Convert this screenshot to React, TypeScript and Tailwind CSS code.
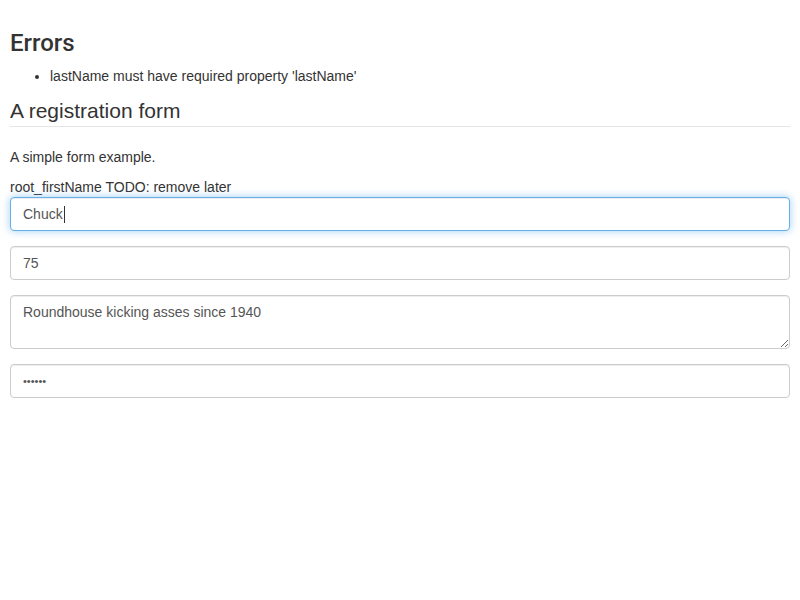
import { FC } from 'react';

const inputBase =
  'block w-full h-[34px] px-3 py-1.5 leading-[20px] text-[#555] bg-white border border-[#ccc] rounded-[4px] shadow-[inset_0_1px_1px_rgba(0,0,0,0.075)] outline-none';

const App: FC = () => {
  return (
    <div className="p-2.5 text-[14px] leading-[20px] text-[#333] font-['Liberation_Sans',Arial,sans-serif] bg-white min-h-[600px]">
      {/* Errors */}
      <h3 className="mt-5 mb-2.5 text-[24px] leading-[1.1] font-medium font-['Roboto',sans-serif]">Errors</h3>
      <ul className="mb-2.5 pl-10 list-disc">
        <li>lastName must have required property 'lastName'</li>
      </ul>

      <form onSubmit={(e) => e.preventDefault()}>
        <fieldset>
          <legend className="block w-full mb-5 text-[21px] leading-[30px] border-b border-[#e5e5e5]">
            A registration form
          </legend>
          <p className="mb-2.5">A simple form example.</p>

          <div className="mb-[15px]">
            <label htmlFor="root_firstName" className="block">
              root_firstName TODO: remove later
            </label>
            <div className="relative">
              <input
                id="root_firstName"
                type="text"
                defaultValue="Chuck"
                className={`${inputBase} text-[14px] !border-[#66afe9] !shadow-[inset_0_1px_1px_rgba(0,0,0,0.075),0_0_8px_rgba(102,175,233,0.6)]`}
              />
              {/* caret */}
              <span className="absolute left-[54px] top-[9px] h-[17px] w-px bg-[#333]" />
            </div>
          </div>

          <div className="mb-[15px]">
            <input type="text" defaultValue="75" className={`${inputBase} text-[14px]`} />
          </div>

          <div className="mb-[15px]">
            <textarea
              rows={2}
              defaultValue="Roundhouse kicking asses since 1940"
              className="block w-full h-[54px] px-3 py-1.5 text-[14px] leading-[20px] text-[#555] bg-white border border-[#ccc] rounded-[4px] shadow-[inset_0_1px_1px_rgba(0,0,0,0.075)] outline-none resize-y"
            />
          </div>

          <div className="mb-[15px]">
            <input type="password" defaultValue="noneed" className={`${inputBase} text-[11px]`} />
          </div>
        </fieldset>
      </form>
    </div>
  );
};

export default App;
